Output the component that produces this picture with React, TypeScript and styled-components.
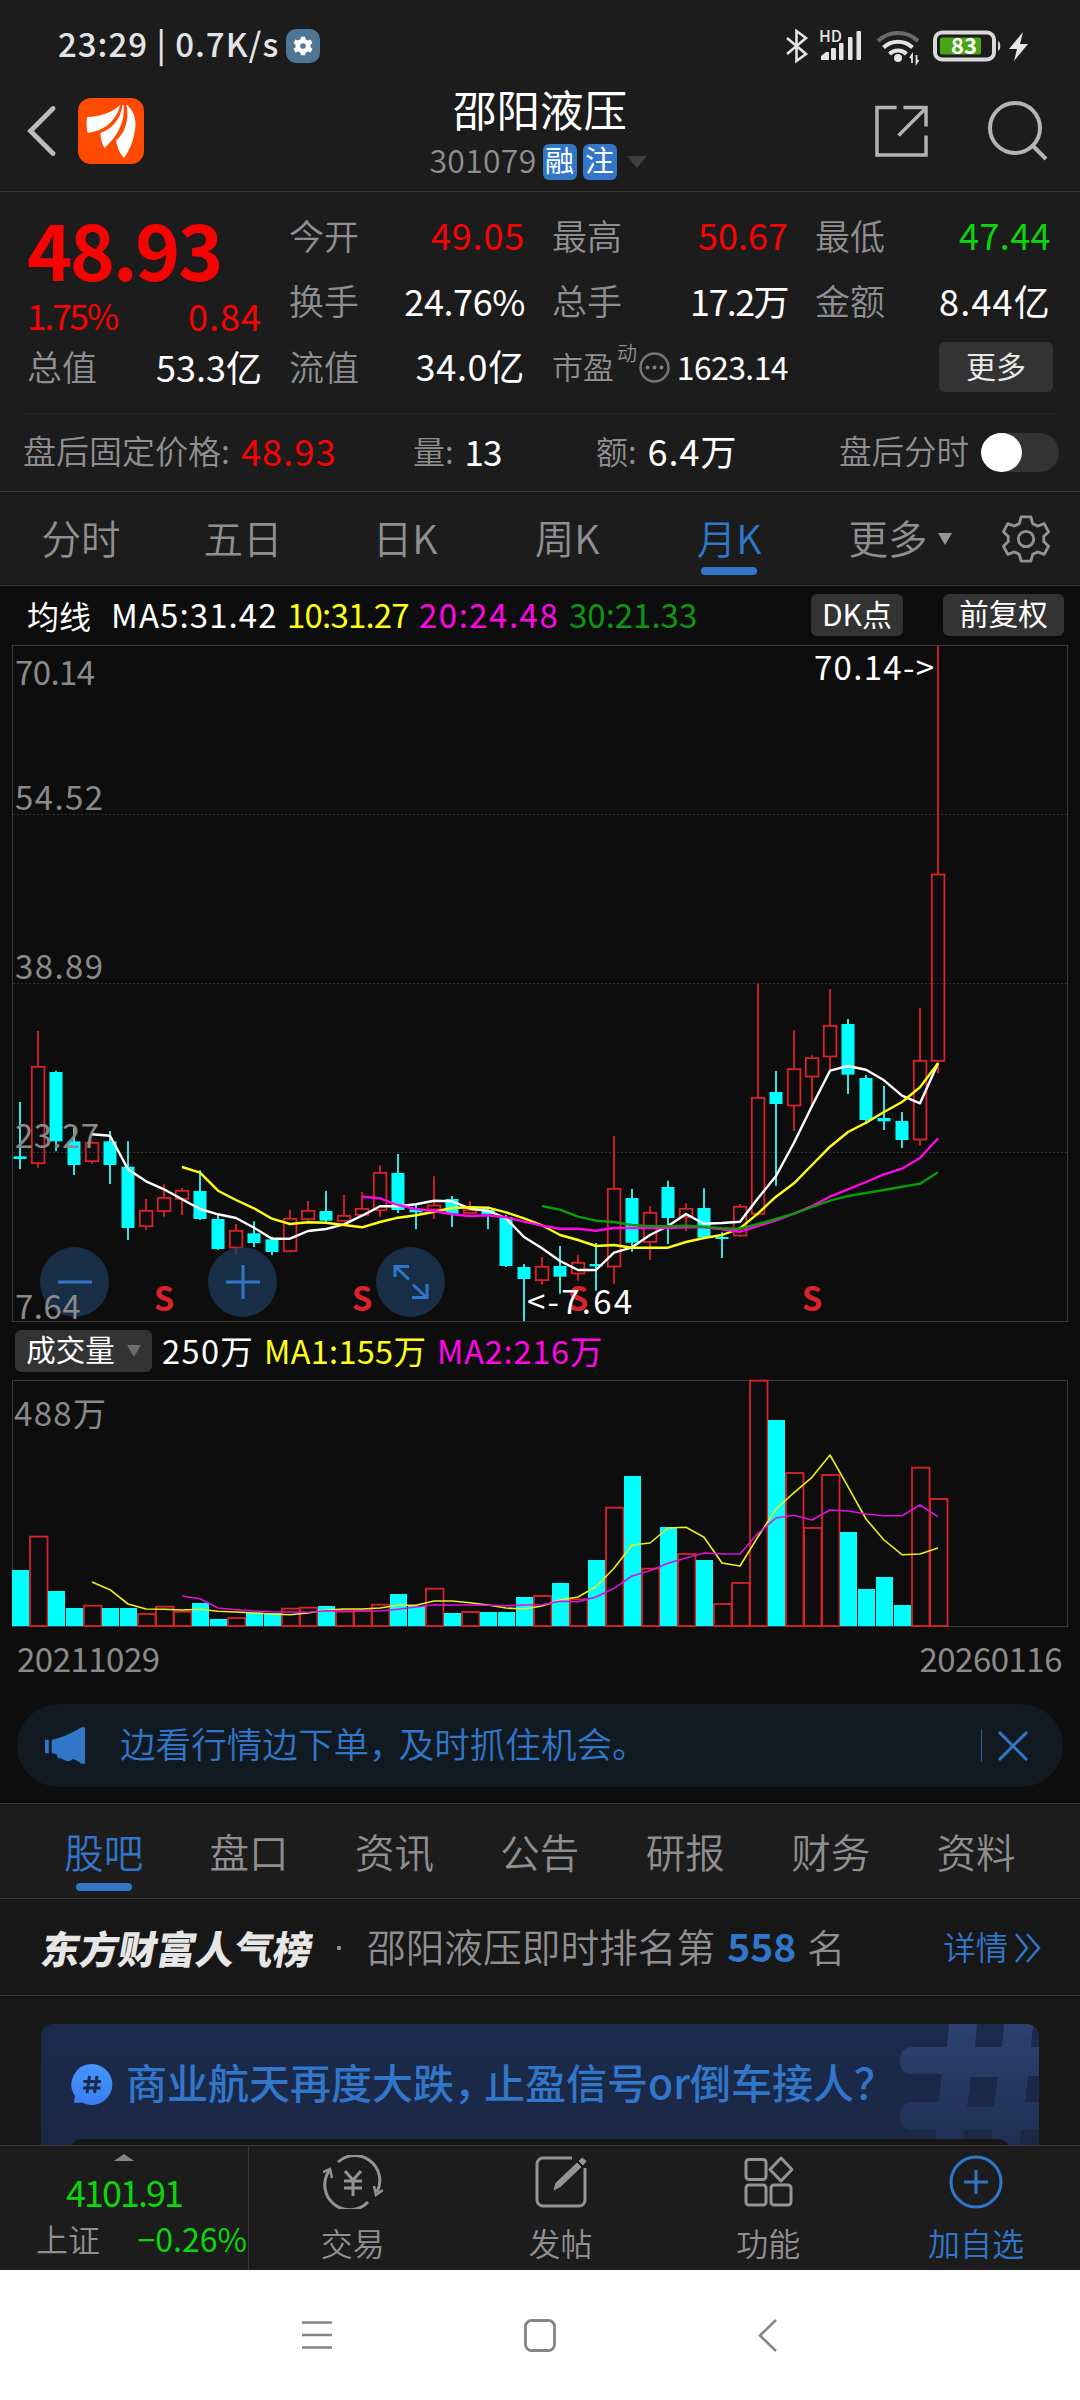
import React from "react";
import styled, { createGlobalStyle, css } from "styled-components";

const C = {
  panel: "#1c1c1c",
  chart: "#0d0d0d",
  list: "#171717",
  line: "#373737",
  grey: "#8f8f91",
  blue: "#3176c8",
  red: "#f60404",
  green: "#0cd50c",
  up: "#d8232b",
  down: "#00ffff",
  yellow: "#ffff14",
  pink: "#ff06e6",
};

const FONT = `"Noto Sans CJK SC", "Noto Sans", sans-serif`;

const Global = createGlobalStyle`
  * { box-sizing: border-box; }
  body { margin: 0; background: ${C.panel}; }
  svg { display: block; flex: none; }
  svg text { font-family: ${FONT}; white-space: pre; }
`;

const Screen = styled.div`
  width: 1080px;
  height: 2400px;
  overflow: hidden;
  display: flex;
  flex-direction: column;
  background: ${C.panel};
  color: #fff;
  font-family: ${FONT};
`;

const Txt = styled.span<{ $s?: number; $c?: string; $w?: number; $ls?: number }>`
  display: block;
  flex: none;
  white-space: pre;
  line-height: 1;
  padding-bottom: 0.13em;
  font-size: ${(p) => p.$s ?? 35}px;
  color: ${(p) => p.$c ?? "#fff"};
  font-weight: ${(p) => p.$w ?? 400};
  letter-spacing: ${(p) => p.$ls ?? 0}px;
`;
const Tight = styled.span<{ $by: number }>`
  letter-spacing: -${(p) => p.$by}px;
`;

/* ---------- status bar ---------- */
const StatusBar = styled.div`
  height: 88px;
  flex: none;
  display: flex;
  align-items: center;
  justify-content: space-between;
  padding: 3px 47px 0 58px;
`;
const Cluster = styled.div<{ $gap?: number }>`
  display: flex;
  align-items: center;
  gap: ${(p) => p.$gap ?? 0}px;
`;
const GearTag = styled.div`
  width: 34px;
  height: 34px;
  border-radius: 10px;
  background: #4f7695;
  display: grid;
  place-items: center;
`;

/* ---------- header ---------- */
const Header = styled.header`
  height: 104px;
  flex: none;
  display: flex;
  align-items: flex-start;
  border-bottom: 1px solid ${C.line};
`;
const HeaderSide = styled.div<{ $end?: boolean }>`
  width: 300px;
  height: 86px;
  display: flex;
  align-items: center;
  justify-content: ${(p) => (p.$end ? "flex-end" : "flex-start")};
  gap: ${(p) => (p.$end ? 60 : 22)}px;
  padding: ${(p) => (p.$end ? "0 32px 0 0" : "0 0 0 27px")};
`;
const Titles = styled.div`
  flex: 1;
  display: flex;
  flex-direction: column;
  align-items: center;
`;
const TitleLine = styled.div`
  height: 48px;
  display: flex;
  align-items: center;
`;
const CodeLine = styled.div`
  height: 37px;
  margin-top: 7px;
  display: flex;
  align-items: center;
  gap: 6px;
  padding-right: 4px;
`;
const Badge = styled.div`
  width: 34px;
  height: 36px;
  border-radius: 6px;
  background: ${C.blue};
  display: grid;
  place-items: center;
`;

/* ---------- quote ---------- */
const Quote = styled.section`
  height: 221px;
  flex: none;
  display: grid;
  grid-template-columns: 235px 236px 236px 236px;
  column-gap: 27px;
  padding: 12px 29px 0 27px;
`;
const QuoteCol = styled.div`
  display: flex;
  flex-direction: column;
`;
const QuoteRow = styled.div<{ $h?: number }>`
  height: ${(p) => p.$h ?? 65.5}px;
  display: flex;
  align-items: center;
  justify-content: space-between;
`;
const BigPrice = styled.div`
  height: 88px;
  display: flex;
  align-items: center;
  padding-top: 9px;
`;
const PeLabel = styled.div`
  display: flex;
  align-items: center;
`;
const Sup = styled.div`
  padding: 0 2px 26px 3px;
`;
const MoreButton = styled.button`
  width: 114px;
  height: 50px;
  border: 0;
  border-radius: 6px;
  margin: 0 -2px 2px auto;
  padding: 0;
  background: #333334;
  display: grid;
  place-items: center;
  font-family: inherit;
`;
const AfterHours = styled.section`
  height: 78px;
  flex: none;
  margin: 0 21px 0 23px;
  border-top: 1px solid #262626;
  display: flex;
  align-items: center;
`;
const Pair = styled.div<{ $w: number }>`
  width: ${(p) => p.$w}px;
  display: flex;
  align-items: center;
  gap: 11px;
`;
const Toggle = styled.div`
  width: 78px;
  height: 39px;
  border-radius: 20px;
  background: linear-gradient(90deg, transparent 10px, #333334 10px);
  margin-left: auto;
`;
const Knob = styled.div`
  width: 41px;
  height: 39px;
  border-radius: 50%;
  background: #fff;
`;

/* ---------- tabs ---------- */
const Tabs = styled.nav<{ $pad: number; $h: number }>`
  height: ${(p) => p.$h}px;
  flex: none;
  display: flex;
  padding: 0 ${(p) => p.$pad}px;
  border-top: 1px solid ${C.line};
  border-bottom: 1px solid ${C.line};
`;
const TabItem = styled.div<{ $w: number; $gap: number; $bottom: number; $shift?: number }>`
  width: ${(p) => p.$w}px;
  display: flex;
  flex-direction: column;
  justify-content: flex-end;
  align-items: center;
  gap: ${(p) => p.$gap}px;
  padding-bottom: ${(p) => p.$bottom}px;
  padding-left: ${(p) => p.$shift ?? 0}px;
`;
const TabText = styled.div`
  height: 44px;
  display: flex;
  align-items: center;
  gap: 10px;
`;
const TabBar = styled.div<{ $on: boolean }>`
  width: 56px;
  height: 8px;
  border-radius: 4px;
  background: ${(p) => (p.$on ? C.blue : "transparent")};
`;
const GearCell = styled.div`
  flex: 1;
  display: grid;
  place-items: center;
`;

/* ---------- charts ---------- */
const ChartArea = styled.section`
  height: 1217px;
  flex: none;
  background: ${C.chart};
`;
const LegendRow = styled.div`
  height: 57px;
  display: flex;
  align-items: center;
  padding: 0 16px 0 27px;
`;
const Slot = styled.div<{ $w?: number; $down?: number }>`
  width: ${(p) => (p.$w ? `${p.$w}px` : "auto")};
  flex: none;
  padding-top: ${(p) => p.$down ?? 0}px;
`;
const Chip = styled.div<{ $w: number; $ml?: number | string }>`
  width: ${(p) => p.$w}px;
  height: 42px;
  flex: none;
  border-radius: 6px;
  background: #333334;
  margin-left: ${(p) => (p.$ml === "auto" ? "auto" : `${p.$ml ?? 0}px`)};
  display: flex;
  align-items: center;
  justify-content: center;
  gap: 12px;
`;
const PriceBox = styled.div`
  position: relative;
  height: 680px;
`;
const RoundButton = styled.button<{ $x: number }>`
  position: absolute;
  left: ${(p) => p.$x - 34.5}px;
  top: 604px;
  width: 69px;
  height: 70px;
  border: 0;
  border-radius: 50%;
  padding: 0;
  background: rgba(29, 60, 98, 0.68);
  display: grid;
  place-items: center;
`;
const FloorLabel = styled.div`
  position: absolute;
  left: 15px;
  top: 646px;
`;
const ChartRow = styled.div`
  height: 56px;
  display: flex;
  align-items: center;
  padding-left: 15px;
`;
const Dates = styled.div`
  height: 60px;
  display: flex;
  align-items: center;
  justify-content: space-between;
  padding: 3px 18px 0 17px;
`;
const Promo = styled.div`
  height: 83px;
  margin: 15px 17px 0;
  border-radius: 42px;
  background: #111921;
  display: flex;
  align-items: center;
  padding: 0 34px 0 28px;
`;
const PromoDivider = styled.div`
  width: 1px;
  height: 33px;
  background: #2c5d98;
  margin: 0 15px 0 auto;
`;

/* ---------- feed ---------- */
const RankRow = styled.section`
  height: 97px;
  flex: none;
  background: ${C.list};
  border-bottom: 1px solid ${C.line};
  display: flex;
  align-items: center;
  padding: 2px 35px 0 42px;
`;
const Slant = styled.div`
  transform: skewX(-10deg);
  width: 290px;
  padding-top: 3px;
`;
const Dot = styled.div`
  width: 4px;
  height: 4px;
  border-radius: 1px;
  margin: 0 26px 0 5px;
  background: ${C.grey};
`;
const Feed = styled.section`
  height: 149px;
  flex: none;
  overflow: hidden;
  background: ${C.list};
  padding: 28px 41px 0;
`;
const TopicCard = styled.div`
  position: relative;
  height: 180px;
  border-radius: 12px;
  overflow: hidden;
  background: linear-gradient(180deg, #1b2a4c, #1b2744 120px);
`;
const TopicHead = styled.div`
  height: 115px;
  display: flex;
  align-items: center;
  gap: 13px;
  padding: 6px 0 0 30px;
`;
const HashArt = styled.div`
  position: absolute;
  right: 0;
  top: 0;
`;
const TopicBody = styled.div`
  position: relative;
  height: 65px;
  margin: 0 30px;
  border-radius: 10px;
  background: ${C.list};
`;

/* ---------- bottom ---------- */
const BottomBar = styled.footer`
  height: 125px;
  flex: none;
  display: flex;
  border-top: 1px solid ${C.line};
`;
const IndexCell = styled.div`
  width: 249px;
  border-right: 1px solid ${C.line};
  display: flex;
  flex-direction: column;
  align-items: center;
  padding-top: 8px;
`;
const IndexRow = styled.div<{ $h: number; $mt: number; $spread?: boolean }>`
  height: ${(p) => p.$h}px;
  margin-top: ${(p) => p.$mt}px;
  align-self: stretch;
  display: flex;
  align-items: center;
  ${(p) =>
    p.$spread
      ? css`
          justify-content: space-between;
          padding: 0 1px 0 36px;
        `
      : css`
          justify-content: center;
        `}
`;
const Action = styled.div`
  flex: 1;
  display: flex;
  flex-direction: column;
  align-items: center;
  padding-top: 9px;
  gap: 17px;
`;
const SystemNav = styled.div`
  height: 130px;
  flex: none;
  background: #fff;
  display: flex;
  align-items: center;
  padding-left: 302px;
`;

/* ---------- data ---------- */
type Candle = [up: number, high: number, top: number, bottom: number, low: number];
const candles: Candle[] = [
  [0, 366, 529, 537, 567], [1, 153, 259, 551, 563], [0, 272, 276, 484, 514], [0, 443, 484, 555, 585],
  [1, 484, 487, 545, 551], [0, 453, 484, 555, 612], [0, 484, 560, 744, 780], [1, 657, 691, 740, 749],
  [1, 613, 652, 695, 710], [1, 624, 631, 658, 705], [0, 571, 633, 717, 720], [0, 704, 717, 807, 809],
  [1, 732, 751, 804, 824], [0, 724, 760, 789, 801], [0, 770, 778, 816, 825], [1, 690, 715, 815, 817],
  [1, 663, 691, 719, 722], [0, 633, 693, 722, 725], [1, 645, 706, 724, 726], [1, 636, 685, 706, 708],
  [1, 556, 577, 692, 711], [0, 522, 579, 690, 699], [0, 675, 688, 697, 748], [1, 589, 675, 690, 717],
  [0, 648, 657, 701, 741], [1, 663, 688, 700, 703], [0, 680, 690, 702, 748], [0, 705, 711, 858, 861],
  [0, 852, 861, 897, 1023], [1, 831, 859, 902, 914], [0, 798, 858, 890, 941], [1, 826, 847, 882, 902],
  [0, 789, 852, 859, 932], [1, 468, 625, 861, 911], [0, 627, 654, 788, 815], [1, 679, 697, 787, 840],
  [0, 602, 621, 714, 792], [1, 670, 685, 712, 754], [0, 625, 684, 773, 775], [0, 757, 771, 777, 834],
  [1, 672, 679, 768, 771], [1, 12, 352, 703, 706], [0, 273, 336, 372, 617], [1, 151, 266, 378, 453],
  [1, 226, 233, 291, 376], [1, 27, 136, 231, 270], [0, 117, 132, 284, 342], [0, 285, 294, 420, 433],
  [0, 318, 414, 424, 450], [0, 396, 423, 480, 504], [1, 84, 241, 480, 497], [1, -1003, -318, 244, 280],
];

const ma5 = [463, 467, 568, 604, 628, 658, 687, 703, 714, 743, 776, 776, 753, 747, 733, 707, 679, 679, 673, 662, 664, 686, 692, 715, 771, 805, 843, 870, 870, 818, 802, 765, 738, 702, 731, 729, 725, 655, 588, 488, 378, 272, 258, 269, 301, 347, 370, 250];
const ma10 = [561, 578, 632, 660, 685, 716, 732, 727, 728, 735, 742, 726, 713, 706, 695, 684, 682, 683, 697, 715, 736, 765, 780, 798, 795, 803, 803, 803, 786, 774, 765, 745, 700, 650, 610, 555, 500, 456, 428, 396, 366, 322, 250];
const ma20 = [650, 655, 675, 687, 693, 703, 708, 706, 712, 725, 737, 746, 746, 752, 744, 744, 744, 744, 742, 742, 748, 755, 738, 721, 701, 678, 650, 628, 606, 583, 566, 534, 475];
const ma30 = [678, 689, 710, 722, 726, 735, 739, 739, 737, 740, 745, 746, 732, 717, 701, 681, 662, 648, 639, 630, 620, 611, 577];

const volumes = [750, 650, 813, 864, 857, 864, 864, 882, 860, 875, 849, 897, 894, 878, 879, 866, 863, 858, 875, 872, 854, 822, 858, 806, 879, 876, 876, 876, 831, 828, 789, 838, 720, 563, 468, 746, 621, 702, 720, 852, 789, 182, 300, 459, 624, 465, 636, 807, 771, 855, 443, 537];
const volumeUp = new Set([1, 4, 7, 8, 9, 12, 15, 16, 18, 19, 20, 23, 25, 29, 31, 33, 35, 37, 39, 40, 41, 43, 44, 45, 50, 51]);
const vma5 = [786, 809, 852, 867, 868, 870, 868, 874, 876, 879, 882, 884, 879, 870, 867, 867, 864, 856, 856, 843, 843, 848, 855, 864, 867, 858, 840, 831, 800, 745, 675, 669, 624, 622, 652, 729, 738, 650, 567, 518, 472, 405, 500, 597, 660, 704, 702, 684];
const vma10 = [828, 836, 864, 869, 873, 875, 876, 877, 872, 873, 873, 873, 868, 861, 854, 855, 855, 856, 857, 855, 854, 844, 845, 831, 805, 768, 752, 730, 714, 699, 702, 702, 640, 594, 586, 600, 570, 573, 582, 587, 587, 555, 590];

const cx = (i: number) => 20 + i * 18;
const priceY = (v: number) => 980 + v / 3;
const volY = (v: number) => 1320 + v / 3;
const trace = (vals: number[], y: (v: number) => number) =>
  vals.map((v, k) => `${cx(52 - vals.length + k)},${y(v).toFixed(1)}`).join(" ");

const MaLine = ({ vals, color, y, w }: { vals: number[]; color: string; y: (v: number) => number; w: number }) => (
  <polyline points={trace(vals, y)} fill="none" stroke={color} strokeWidth={w} strokeLinejoin="round" />
);

const PriceChart = () => (
  <svg width="1080" height="680" viewBox="0 643 1080 680">
    <g stroke="#303030" strokeWidth="1" strokeDasharray="2 2">
      {[814.5, 983.5, 1152.5].map((y) => (
        <line key={y} x1="13" x2="1067" y1={y} y2={y} />
      ))}
    </g>
    <rect x="12.5" y="645.5" width="1055" height="676" fill="none" stroke="#3c3c3c" />
    {candles.map(([up, h, t, b, l], i) => {
      const x = cx(i);
      return up ? (
        <g key={i} stroke={C.up} strokeWidth="1.8" fill="none">
          <path d={`M${x} ${priceY(h)}V${priceY(t)}M${x} ${priceY(b)}V${priceY(l)}`} />
          <rect x={x - 6.2} y={priceY(t) + 0.5} width="12.6" height={(b - t) / 3 - 1} />
        </g>
      ) : (
        <g key={i}>
          <path d={`M${x} ${priceY(h)}V${priceY(l)}`} stroke="#35e4e0" strokeWidth="2" />
          <rect x={x - 6.5} y={priceY(t)} width="13" height={(b - t) / 3} fill={C.down} />
        </g>
      );
    })}
    <MaLine vals={ma5} color="#fff" y={priceY} w={2.4} />
    <MaLine vals={ma10} color={C.yellow} y={priceY} w={2.4} />
    <MaLine vals={ma20} color={C.pink} y={priceY} w={2.4} />
    <MaLine vals={ma30} color="#0a9a0a" y={priceY} w={2.4} />
    <g fill="#8a8a8a" fontSize="33">
      <text x="15" y="685" textLength="80">70.14</text>
      <text x="15" y="810" textLength="88">54.52</text>
      <text x="15" y="979" textLength="88">38.89</text>
      <text x="15" y="1148" textLength="84">23.27</text>
    </g>
    <g fill={C.up} fontSize="33" fontWeight="700" textAnchor="middle">
      {[164, 362, 578, 812].map((x) => (
        <text key={x} x={x} y="1311">S</text>
      ))}
    </g>
    <g fill="#fff" fontSize="33">
      <text x="814" y="680" textLength="120">{"70.14->"}</text>
      <text x="527" y="1314" textLength="105">{"<-7.64"}</text>
    </g>
  </svg>
);

const VolumeChart = () => (
  <svg width="1080" height="250" viewBox="0 1379 1080 250">
    <rect x="12.5" y="1380.5" width="1055" height="246" fill="none" stroke="#3c3c3c" />
    {volumes.map((v, i) => {
      const x = cx(i);
      return volumeUp.has(i) ? (
        <rect key={i} x={x - 8} y={volY(v)} width="17.5" height={1626 - volY(v)} fill="none" stroke={C.up} strokeWidth="1.8" />
      ) : (
        <rect key={i} x={x - 8} y={volY(v)} width="17" height={1626 - volY(v)} fill={C.down} />
      );
    })}
    <MaLine vals={vma5} color="#eeee20" y={volY} w={1.6} />
    <MaLine vals={vma10} color="#e010dc" y={volY} w={1.6} />
    <text x="14" y="1426" fontSize="33" fill="#8a8a8a" textLength="92">488万</text>
  </svg>
);

/* ---------- icons ---------- */
const GEAR = "M-5 -23 H5 L7 -16 L12 -13.5 L19 -16 L23.5 -7.5 L18.5 -2.5 V2.5 L23.5 7.5 L19 16 L12 13.5 L7 16 L5 23 H-5 L-7 16 L-12 13.5 L-19 16 L-23.5 7.5 L-18.5 2.5 V-2.5 L-23.5 -7.5 L-19 -16 L-12 -13.5 L-7 -16 Z";

const Triangle = ({ w, h, c, up }: { w: number; h: number; c: string; up?: boolean }) => (
  <svg width={w} height={h} viewBox="0 0 10 10" preserveAspectRatio="none">
    <path d={up ? "M0 10H10L5 0Z" : "M0 0H10L5 10Z"} fill={c} />
  </svg>
);

const StatusIcons = () => (
  <svg width="250" height="40" viewBox="783 25 250 40">
    <g fill="none" stroke="#e4e4e4" strokeWidth="2.6" strokeLinejoin="miter">
      <path d="M787 37L806 53L796.500 60V30L806 37L787 53" />
    </g>
    <text x="819" y="40.500" fontSize="16" fontWeight="500" fill="#e4e4e4" textLength="23">HD</text>
    <g fill="#e4e4e4">
      <path d="M821 59v-4l5-4h3v8z" />
      <rect x="831" y="47" width="5" height="12" rx="1" />
      <rect x="839" y="42" width="4.500" height="17" rx="1" />
      <rect x="848" y="36" width="4.500" height="23" rx="1" />
      <rect x="856.500" y="30" width="4.500" height="29" rx="1" />
    </g>
    <g fill="none" strokeWidth="4">
      <path d="M878 40a29 29 0 0 1 40 0" stroke="#6a6a6a" />
      <path d="M883.500 46.500a21 21 0 0 1 29 0" stroke="#e4e4e4" />
      <path d="M889.500 53a12 12 0 0 1 17 0" stroke="#e4e4e4" />
    </g>
    <circle cx="898" cy="57" r="4" fill="#e4e4e4" />
    <path d="M912 62V54l-2 3M916.500 54v8l2-3" stroke="#e4e4e4" strokeWidth="1.800" fill="none" />
    <rect x="935" y="31.500" width="59" height="27" rx="7" fill="none" stroke="#d8d8d8" strokeWidth="4" />
    <rect x="940" y="36.500" width="41" height="17" rx="2" fill="#4aa516" />
    <path d="M998 40c3 1 3 9 0 10z" fill="#d8d8d8" />
    <text x="964" y="53" fontSize="22" fontWeight="700" fill="#fff" textAnchor="middle">83</text>
    <path d="M1023 31L1009 48h8l-3 12L1028 43h-8z" fill="#e4e4e4" />
  </svg>
);

const Logo = () => (
  <svg width="66" height="66" viewBox="0 0 66 66">
    <rect width="66" height="66" rx="13" fill="#ff4a02" />
    <g fill="#fff">
      <path d="M42.500 6.500C34 15 22 18.500 9.500 19C8 20 8.500 30 9.500 34.700C24 34 38 24 42.500 6.500Z" />
      <path d="M44.500 7C43 21 34 31 22.500 35C22.500 41 24 46 26.500 50C38 40 47.500 25 45.500 7Z" />
      <path d="M48.500 6.500C51.500 22 47 35 38 42.500C39 49 42 56 46 60C53 51 57.500 36 57.500 26C57.500 18 54 11 48.500 6.500Z" />
    </g>
  </svg>
);

const stroke = { fill: "none", strokeWidth: 3 } as const;

const TradeIcon = () => (
  <svg width="60" height="54" viewBox="-30 -27 60 54">
    <g {...stroke} stroke="#949494">
      <path d="M-15 -20A25 25 0 0 1 24 10M15 20A25 25 0 0 1 -24 -11" />
      <path d="M-30 -10L-23 -13L-21 -4M30 8L23 13L21 4" strokeWidth="2.500" />
      <path d="M-8 -11L0 -2L8 -11M0 -2V14M-9 -1H9M-9 6H9" />
    </g>
  </svg>
);
const PostIcon = () => (
  <svg width="54" height="54" viewBox="-27 -27 54 54">
    <path d="M11 -24H-18A6 6 0 0 0 -24 -18V18A6 6 0 0 0 -18 24H18A6 6 0 0 0 24 18V-14" {...stroke} stroke="#949494" />
    <path d="M-7 8L-5 1L16 -19L20 -15L0 4ZM18 -21L21 -24L25 -21L22 -17Z" fill="#949494" stroke="#949494" strokeWidth="1" />
  </svg>
);
const GridIcon = () => (
  <svg width="54" height="54" viewBox="-27 -27 54 54">
    <g {...stroke} stroke="#949494" strokeLinejoin="round">
      <rect x="-22" y="-22.500" width="20" height="20" rx="3" />
      <rect x="-22" y="3" width="20" height="20" rx="3" />
      <rect x="3" y="3" width="20" height="20" rx="3" />
      <path d="M13 -24L24 -12.500L13 -1L2 -12.500Z" />
    </g>
  </svg>
);
const AddIcon = () => (
  <svg width="54" height="54" viewBox="-27 -27 54 54">
    <g {...stroke} stroke={C.blue}>
      <circle r="25" />
      <path d="M-12 0H12M0 -12V12" />
    </g>
  </svg>
);

const Tag = ({ children }: { children: string }) => (
  <Badge>
    <Txt $s={29}>{children}</Txt>
  </Badge>
);

const Cell = ({ label, value, color, ls }: { label: string; value: string; color?: string; ls?: number }) => (
  <QuoteRow>
    <Txt $c={C.grey} $w={350}>{label}</Txt>
    <Txt $s={36} $c={color} $ls={ls}>{value}</Txt>
  </QuoteRow>
);

export default function App() {
  return (
    <Screen>
      <Global />
      <StatusBar>
        <Cluster $gap={7}>
          <Txt $s={33} $c="#e4e4e4" $w={500} $ls={1}>23:29 | 0.7K/s</Txt>
          <GearTag>
            <svg width="20" height="20" viewBox="-25 -25 50 50">
              <path d={GEAR} fill="#fff" />
              <circle r="7" fill="#4f7695" />
            </svg>
          </GearTag>
        </Cluster>
        <StatusIcons />
      </StatusBar>

      <Header>
        <HeaderSide>
          <svg width="29" height="50" viewBox="0 0 29 50">
            <path d="M26 2.500L3.500 25L26 47.500" fill="none" stroke="#bcbcbc" strokeWidth="4.800" strokeLinecap="round" />
          </svg>
          <Logo />
        </HeaderSide>
        <Titles>
          <TitleLine>
            <Txt $s={43.5}>邵阳液压</Txt>
          </TitleLine>
          <CodeLine>
            <Txt $s={32} $c={C.grey} $w={350} $ls={0.3}>301079</Txt>
            <Tag>融</Tag>
            <Tag>注</Tag>
            <Cluster $gap={4}>
              <i />
              <Triangle w={20} h={12} c="#3e3e3e" />
            </Cluster>
          </CodeLine>
        </Titles>
        <HeaderSide $end>
          <svg width="53" height="52" viewBox="0 0 54 53">
            <path d="M22 2.500H2V51H52V31M52 22V2.500H29M51 4L24 31" fill="none" stroke="#b4b4b4" strokeWidth="3.500" />
          </svg>
          <svg width="60" height="60" viewBox="0 0 60 60">
            <g fill="none" stroke="#b4b4b4" strokeWidth="4">
              <circle cx="27" cy="27" r="25" />
              <path d="M45 45L58 58" />
            </g>
          </svg>
        </HeaderSide>
      </Header>

      <Quote>
        <QuoteCol>
          <BigPrice>
            <Txt $s={77} $c={C.red} $w={700} $ls={-2.6}>48.93</Txt>
          </BigPrice>
          <QuoteRow $h={50}>
            <Txt $s={35} $c={C.red} $ls={-2}>1.75%</Txt>
            <Txt $s={36} $c={C.red} $ls={1}>0.84</Txt>
          </QuoteRow>
          <QuoteRow $h={52}>
            <Txt $c={C.grey} $w={350}>总值</Txt>
            <Txt $s={36}>53.3亿</Txt>
          </QuoteRow>
        </QuoteCol>
        <QuoteCol>
          <Cell label="今开" value="49.05" color={C.red} ls={0.8} />
          <Cell label="换手" value="24.76%" ls={-0.4} />
          <Cell label="流值" value="34.0亿" ls={0.7} />
        </QuoteCol>
        <QuoteCol>
          <Cell label="最高" value="50.67" color={C.red} />
          <Cell label="总手" value="17.2万" ls={-1.6} />
          <QuoteRow>
            <PeLabel>
              <Txt $s={31} $c={C.grey} $w={350}>市盈</Txt>
              <Sup>
                <Txt $s={20} $c={C.grey} $w={350}>动</Txt>
              </Sup>
              <svg width="31" height="31" viewBox="0 0 31 31">
                <circle cx="15.500" cy="15.500" r="14" fill="none" stroke="#757575" strokeWidth="2.500" />
                <g fill="#858585">
                  <circle cx="8.500" cy="15.500" r="1.900" />
                  <circle cx="15.500" cy="15.500" r="1.900" />
                  <circle cx="22.500" cy="15.500" r="1.900" />
                </g>
              </svg>
            </PeLabel>
            <Txt $s={32} $ls={-0.6}>1623.14</Txt>
          </QuoteRow>
        </QuoteCol>
        <QuoteCol>
          <Cell label="最低" value="47.44" color={C.green} ls={0.4} />
          <Cell label="金额" value="8.44亿" ls={1.2} />
          <QuoteRow>
            <MoreButton>
              <Txt $s={30} $c="#e8e8e8">更多</Txt>
            </MoreButton>
          </QuoteRow>
        </QuoteCol>
      </Quote>

      <AfterHours>
        <Pair $w={390}>
          <Txt $s={33} $c={C.grey} $w={350}>盘后固定价格:</Txt>
          <Txt $s={36} $c={C.red} $ls={1.2}>48.93</Txt>
        </Pair>
        <Pair $w={183}>
          <Txt $s={32} $c={C.grey} $w={350}>量:</Txt>
          <Txt $s={35} $ls={-1}>13</Txt>
        </Pair>
        <Pair $w={243}>
          <Txt $s={32} $c={C.grey} $w={350}>额:</Txt>
          <Txt $s={36} $ls={1}>6.4万</Txt>
        </Pair>
        <Txt $s={32.5} $c={C.grey} $w={350}>盘后分时</Txt>
        <Toggle>
          <Knob />
        </Toggle>
      </AfterHours>

      <Tabs $pad={0} $h={95}>
        {["分时", "五日", "日K", "周K", "月K", "更多"].map((t) => (
          <TabItem key={t} $w={162} $gap={6} $bottom={10} $shift={t === "更多" ? 18 : 0}>
            <TabText>
              <Txt $s={39.5} $w={350} $c={t === "月K" ? C.blue : C.grey}>{t}</Txt>
              {t === "更多" && <Triangle w={14} h={12} c="#949494" />}
            </TabText>
            <TabBar $on={t === "月K"} />
          </TabItem>
        ))}
        <GearCell>
          <svg width="48" height="48" viewBox="-25 -25 50 50">
            <g fill="none" stroke="#929292" strokeWidth="3">
              <path d={GEAR} strokeLinejoin="round" />
              <circle r="8" />
            </g>
          </svg>
        </GearCell>
      </Tabs>

      <ChartArea>
        <LegendRow>
          <Slot $w={84} $down={5}>
            <Txt $s={32}>均线</Txt>
          </Slot>
          <Slot $w={176} $down={5}>
            <Txt $s={33} $ls={1.1}>MA5:31.42</Txt>
          </Slot>
          <Slot $w={132} $down={5}>
            <Txt $s={33} $c={C.yellow} $ls={-0.8}>10:31.27</Txt>
          </Slot>
          <Slot $w={150} $down={5}>
            <Txt $s={33} $c={C.pink} $ls={1.5}>20:24.48</Txt>
          </Slot>
          <Slot $down={5}>
            <Txt $s={33} $c="#0f9612">30:21.33</Txt>
          </Slot>
          <Chip $w={92} $ml="auto">
            <Txt $s={30}>DK点</Txt>
          </Chip>
          <Chip $w={121} $ml={40}>
            <Txt $s={29.5}>前复权</Txt>
          </Chip>
        </LegendRow>
        <PriceBox>
          <PriceChart />
          <RoundButton $x={74.5}>
            <svg width="40" height="40" viewBox="-20 -20 40 40">
              <path d="M-17 0H17" stroke={C.blue} strokeWidth="3" />
            </svg>
          </RoundButton>
          <RoundButton $x={242.5}>
            <svg width="40" height="40" viewBox="-20 -20 40 40">
              <path d="M-17 0H17M0 -17V17" stroke={C.blue} strokeWidth="3" />
            </svg>
          </RoundButton>
          <RoundButton $x={410.5}>
            <svg width="40" height="40" viewBox="-20 -20 40 40">
              <path d="M-16 -5V-15.500H-2M-15 -15L-2 -2.500M16 2V15.500H1M15 15L2 2.500" fill="none" stroke={C.blue} strokeWidth="3" />
            </svg>
          </RoundButton>
          <FloorLabel>
            <Txt $s={33} $c="#8a8a8a" $ls={0.5}>7.64</Txt>
          </FloorLabel>
        </PriceBox>
        <ChartRow>
          <Chip $w={137}>
            <Txt $s={29.5}>成交量</Txt>
            <Triangle w={14} h={12} c="#6c6c6c" />
          </Chip>
          <Slot $w={10} />
          <Slot $w={102} $down={2}>
            <Txt $s={32.5} $ls={1.4}>250万</Txt>
          </Slot>
          <Slot $w={173} $down={2}>
            <Txt $s={32.5} $c={C.yellow} $ls={0.3}>MA1:155万</Txt>
          </Slot>
          <Slot $down={2}>
            <Txt $s={32.5} $c={C.pink} $ls={0.8}>MA2:216万</Txt>
          </Slot>
        </ChartRow>
        <VolumeChart />
        <Dates>
          <Txt $s={33} $c="#8a8a8a" $ls={-0.5}>20211029</Txt>
          <Txt $s={33} $c="#8a8a8a" $ls={-0.5}>20260116</Txt>
        </Dates>
        <Promo>
          <svg width="42" height="37" viewBox="0 0 44 38">
            <path d="M0 13H4V27H0ZM7 13C16 12 28 6 38 0H42V38H38C35 36 32 34 29 33C26 38 20 34 16 32C13 34 13 30 12 28L7 27Z" fill={C.blue} />
          </svg>
          <Slot $w={33} />
          <Txt $s={35.6} $c={C.blue} $w={350}>
            边看行情边下单<Tight $by={6}>，</Tight>及时抓住机会。
          </Txt>
          <PromoDivider />
          <svg width="32" height="30" viewBox="0 0 32 30">
            <path d="M2 1L30 29M30 1L2 29" stroke={C.blue} strokeWidth="3" />
          </svg>
        </Promo>
      </ChartArea>

      <Tabs $pad={31} $h={96}>
        {["股吧", "盘口", "资讯", "公告", "研报", "财务", "资料"].map((t, i) => (
          <TabItem key={t} $w={145.4} $gap={8} $bottom={7}>
            <TabText>
              <Txt $s={39.5} $w={350} $c={i === 0 ? C.blue : C.grey}>{t}</Txt>
            </TabText>
            <TabBar $on={i === 0} />
          </TabItem>
        ))}
      </Tabs>

      <RankRow>
        <Slant>
          <Txt $s={38.7} $w={900} $c="#e6e6e6">东方财富人气榜</Txt>
        </Slant>
        <Dot />
        <Txt $s={38.7} $c={C.grey} $w={350}>邵阳液压即时排名第</Txt>
        <Slot $w={12} />
        <Txt $s={39} $c={C.blue} $w={700}>558</Txt>
        <Slot $w={11} />
        <Txt $s={38} $c={C.grey} $w={350}>名</Txt>
        <Slot $w={98} />
        <Txt $s={32.5} $c={C.blue} $w={350}>详情</Txt>
        <svg width="34" height="30" viewBox="-7 0 34 30">
          <path d="M1 1L12 15L1 29M12 1L24 15L12 29" fill="none" stroke={C.blue} strokeWidth="2.500" />
        </svg>
      </RankRow>

      <Feed>
        <TopicCard>
          <HashArt>
            <svg width="139" height="121" viewBox="900 2024 139 121">
              <defs>
                <linearGradient id="hash" x1="0" y1="0" x2="0" y2="1">
                  <stop offset="0" stopColor="#2c4270" />
                  <stop offset="1" stopColor="#1f2f54" />
                </linearGradient>
              </defs>
              <path
                fill="url(#hash)"
                d="M949 2024H977L975 2047H1002L1004 2024H1033L1031 2047H1039V2076H1028L1025 2102H1039V2130H1021L1019 2145H990L992 2130H964L962 2145H934L936 2130H912Q900 2130 900 2116Q900 2102 912 2102H939L942 2074H912Q900 2074 900 2060Q900 2047 914 2047H947ZM971 2077L967 2107H994L998 2077Z"
              />
            </svg>
          </HashArt>
          <TopicHead>
            <svg width="42" height="42" viewBox="0 0 42 42">
              <defs>
                <linearGradient id="dot" x1="0" y1="0" x2="0" y2="1">
                  <stop offset="0" stopColor="#4596fa" />
                  <stop offset="1" stopColor="#3a7df2" />
                </linearGradient>
              </defs>
              <path d="M21 0A20.500 20.500 0 1 1 11 38.500L3 39L4 32A20.500 20.500 0 0 1 21 0Z" fill="url(#dot)" />
              <path d="M18.500 12L16 29M26 12L23.500 29M12.500 17.500H30M12 24H29.500" stroke="#1b2a4c" strokeWidth="3" fill="none" />
            </svg>
            <Txt $s={41} $w={500} $c={C.blue}>
              商业航天再度大跌<Tight $by={11}>，</Tight>止盈信号or倒车接人？
            </Txt>
          </TopicHead>
          <TopicBody />
        </TopicCard>
      </Feed>

      <BottomBar>
        <IndexCell>
          <Triangle w={20} h={7} c="#858585" up />
          <IndexRow $h={40} $mt={12}>
            <Txt $s={36} $c={C.green} $ls={-2}>4101.91</Txt>
          </IndexRow>
          <IndexRow $h={40} $mt={7} $spread>
            <Txt $s={32} $c={C.grey} $w={350}>上证</Txt>
            <Txt $s={32} $c={C.green}>−0.26%</Txt>
          </IndexRow>
        </IndexCell>
        <Action>
          <TradeIcon />
          <Txt $s={32} $c={C.grey} $w={350}>交易</Txt>
        </Action>
        <Action>
          <PostIcon />
          <Txt $s={32} $c={C.grey} $w={350}>发帖</Txt>
        </Action>
        <Action>
          <GridIcon />
          <Txt $s={32} $c={C.grey} $w={350}>功能</Txt>
        </Action>
        <Action>
          <AddIcon />
          <Txt $s={32} $c={C.blue} $w={350}>加自选</Txt>
        </Action>
      </BottomBar>

      <SystemNav>
        <svg width="30" height="28" viewBox="0 0 30 28">
          <path d="M0 1.500H30M0 14H30M0 26.500H30" stroke="#858585" strokeWidth="2.600" />
        </svg>
        <Slot $w={192} />
        <svg width="32" height="33" viewBox="0 0 32 33">
          <rect x="1.500" y="1.500" width="29" height="30" rx="6" fill="none" stroke="#858585" strokeWidth="2.800" />
        </svg>
        <Slot $w={202} />
        <svg width="20" height="33" viewBox="0 0 20 33">
          <path d="M18 1L2 16.500L18 32" fill="none" stroke="#858585" strokeWidth="2.600" />
        </svg>
      </SystemNav>
    </Screen>
  );
}
